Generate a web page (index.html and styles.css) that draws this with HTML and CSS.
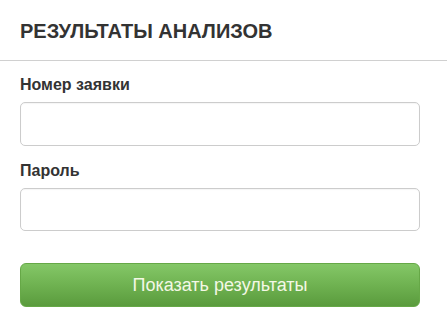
FILE: index.html
```html
<!DOCTYPE html>
<html lang="ru">
<head>
<meta charset="utf-8">
<title>Результаты анализов</title>
<link rel="stylesheet" href="styles.css">
</head>
<body>
<div class="panel">
  <div class="panel-head">
    <h1 class="panel-title">РЕЗУЛЬТАТЫ АНАЛИЗОВ</h1>
  </div>
  <form class="form">
    <div class="field">
      <label class="field-label">Номер заявки</label>
      <input class="field-input" type="text">
    </div>
    <div class="field">
      <label class="field-label">Пароль</label>
      <input class="field-input field-input-pass" type="password">
    </div>
    <button class="btn" type="button">Показать результаты</button>
  </form>
</div>
</body>
</html>
```
FILE: styles.css
```css
html, body {
  margin: 0;
  padding: 0;
  background: #ffffff;
}
body {
  font-family: "Liberation Sans", Arial, sans-serif;
  color: #333333;
}
.panel {
  width: 447px;
}
.panel-head {
  padding: 19px 20px 17px;
  border-bottom: 1px solid #d0d0d0;
}
.panel-title {
  margin: 0;
  font-size: 20px;
  line-height: 24px;
  font-weight: bold;
  color: #333333;
}
.form {
  display: flex;
  flex-direction: column;
  width: 400px;
  padding: 14px 0 0 20px;
}
.field {
  display: flex;
  flex-direction: column;
  gap: 7px;
  margin-bottom: 15px;
}
.field-label {
  font-size: 16px;
  line-height: 20px;
  font-weight: bold;
  color: #333333;
}
.field-input {
  box-sizing: border-box;
  height: 44px;
  width: 400px;
  margin: 0;
  border: 1px solid #cccccc;
  border-radius: 5px;
  background: #ffffff;
  box-shadow: inset 0 1px 1px rgba(0,0,0,0.04);
  font-size: 16px;
  padding: 0 10px;
}
.field-input-pass {
  height: 43px;
}
.btn {
  box-sizing: border-box;
  margin-top: 17px;
  width: 400px;
  height: 44px;
  border: 1px solid #66a847;
  border-radius: 6px;
  background: linear-gradient(to bottom, #84c767 0%, #6fb251 50%, #5a9b3d 100%);
  color: #f4f8e6;
  font-family: "Liberation Sans", Arial, sans-serif;
  font-size: 18px;
  padding: 0;
  cursor: pointer;
}
```
